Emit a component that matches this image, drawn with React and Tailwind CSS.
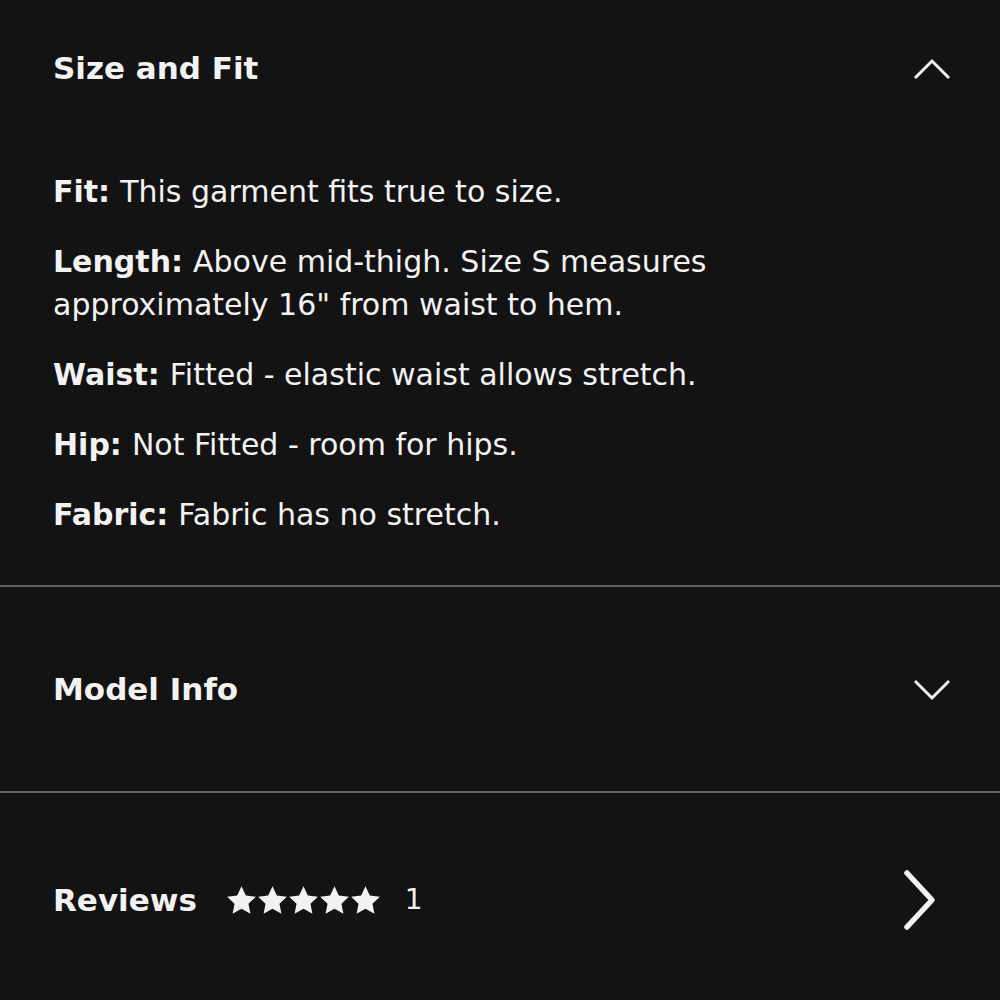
import React from 'react';

const details = [
  { label: 'Fit:', text: 'This garment fits true to size.' },
  { label: 'Length:', text: 'Above mid-thigh. Size S measures approximately 16" from waist to hem.' },
  { label: 'Waist:', text: 'Fitted - elastic waist allows stretch.' },
  { label: 'Hip:', text: 'Not Fitted - room for hips.' },
  { label: 'Fabric:', text: 'Fabric has no stretch.' },
];

function Star() {
  return (
    <svg width="29" height="28" viewBox="1.6 1.6 20.8 20" fill="#f2f2f2">
      <path d="M12 1.8l3.1 6.6 7.2.9-5.3 5 1.4 7.1L12 17.9l-6.4 3.5 1.4-7.1-5.3-5 7.2-.9z" />
    </svg>
  );
}

export default function App() {
  return (
    <div
      className="w-[1000px] h-[1000px] overflow-hidden bg-[#141314] text-[#f2f2f2]"
      style={{ fontFamily: '"DejaVu Sans", "Open Sans", sans-serif' }}
    >
      {/* Size and Fit - expanded */}
      <div className="px-[53px] pb-[49px]">
        <div className="h-[136px] flex items-center justify-between">
          <h2 className="text-[31px] font-semibold">Size and Fit</h2>
          <svg width="42" height="28" viewBox="0 0 42 28" className="mr-[-6px]">
            <path d="M4 24 L21 7 L38 24" fill="none" stroke="#f2f2f2" strokeWidth="3" />
          </svg>
        </div>
        <div className="mt-[34px] flex flex-col gap-[27px] w-[700px]">
          {details.map((d) => (
            <p key={d.label} className="text-[30px] leading-[43px]">
              <span className="font-bold">{d.label}</span>
              <span className="ml-[10px]">{d.text}</span>
            </p>
          ))}
        </div>
      </div>
      <div className="h-[2px] bg-[#5f5f5f]" />

      {/* Model Info - collapsed */}
      <div className="h-[204px] px-[53px] flex items-center justify-between">
        <h2 className="text-[31px] font-semibold">Model Info</h2>
        <svg width="42" height="28" viewBox="0 0 42 28" className="mr-[-6px]">
          <path d="M4 6 L21 23 L38 6" fill="none" stroke="#f2f2f2" strokeWidth="3" />
        </svg>
      </div>
      <div className="h-[2px] bg-[#5f5f5f]" />

      {/* Reviews */}
      <div className="h-[214px] px-[53px] flex items-center justify-between">
        <div className="flex items-center">
          <h2 className="text-[31px] font-semibold">Reviews</h2>
          <div className="flex ml-[30px] gap-[2px]">
            <Star />
            <Star />
            <Star />
            <Star />
            <Star />
          </div>
          <span className="ml-[25px] text-[28px]">1</span>
        </div>
        <svg width="40" height="64" viewBox="0 0 40 64" className="mr-[8px]">
          <path d="M8 5 L33 32 L8 59" fill="none" stroke="#f2f2f2" strokeWidth="5.5" strokeLinecap="round" strokeLinejoin="round" />
        </svg>
      </div>
    </div>
  );
}
